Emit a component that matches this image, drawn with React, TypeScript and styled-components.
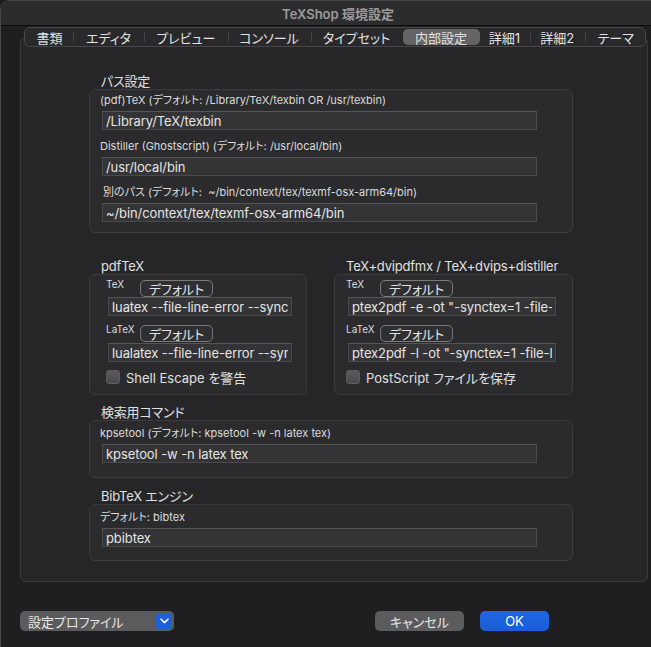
import React from "react";
import styled, { createGlobalStyle } from "styled-components";

const FONT = `Inter, "Noto Sans CJK JP", sans-serif`;

const GlobalStyle = createGlobalStyle`
  html, body {
    margin: 0;
    padding: 0;
    background: #1e1e20;
  }
  * {
    box-sizing: border-box;
  }
`;

const Window = styled.div`
  width: 651px;
  height: 647px;
  display: flex;
  flex-direction: column;
  overflow: hidden;
  background: #1f1f21;
  border-left: 1px solid #48484a;
  border-top: 1px solid #48484a;
  border-top-left-radius: 10px;
  font-family: ${FONT};
  font-feature-settings: "palt";
  color: #dedede;
`;

const TitleBar = styled.div`
  height: 25px;
  flex: none;
  display: flex;
  align-items: center;
  justify-content: center;
  padding-left: 24px;
  background: #2c2c2e;
  border-bottom: 1px solid #0b0b0c;
  color: #9b9b9d;
  font-size: 13px;
  font-weight: 600;
`;

const Body = styled.div`
  flex: 1;
  display: flex;
  flex-direction: column;
  padding: 0 3px 0 19px;
`;

const TabBar = styled.div`
  position: relative;
  z-index: 1;
  display: flex;
  width: 622px;
  height: 20px;
  margin: 1px 0 0 4px;
  padding: 0 1px;
  border: 1px solid #48484a;
  border-radius: 6px;
  background: #29292b;
`;

const Tab = styled.div<{ $w: number; $active?: boolean; $sep?: boolean }>`
  position: relative;
  width: ${(p) => p.$w}px;
  flex: none;
  display: flex;
  align-items: center;
  justify-content: center;
  font-size: 13px;
  color: #e2e2e2;
  margin: 1px 0;
  border-radius: 5px;
  background: ${(p) => (p.$active ? "#646466" : "transparent")};
  &::before {
    content: "";
    display: ${(p) => (p.$sep ? "block" : "none")};
    position: absolute;
    left: 0;
    top: 3px;
    bottom: 3px;
    width: 1px;
    background: #444446;
  }
`;

const Panel = styled.div`
  margin-top: -10px;
  height: 545px;
  border: 1px solid #3a3a3c;
  border-radius: 6px;
  background: #262628;
  padding: 35px 0 0 68px;
  display: flex;
  flex-direction: column;
`;

const Section = styled.div<{ $mt?: number; $w?: number }>`
  margin-top: ${(p) => p.$mt ?? 0}px;
  width: ${(p) => p.$w ?? 484}px;
  display: flex;
  flex-direction: column;
`;

const SectionTitle = styled.div`
  height: 16px;
  line-height: 16px;
  font-size: 13px;
  letter-spacing: -0.2px;
  padding-left: 12px;
  color: #e0e0e0;
  white-space: nowrap;
`;

const Group = styled.div<{ $pt?: number; $pb?: number; $pl?: number }>`
  border: 1px solid #3c3c3e;
  border-radius: 6px;
  background: #2b2b2d;
  padding: ${(p) => p.$pt ?? 4}px 0 ${(p) => p.$pb ?? 10}px
    ${(p) => p.$pl ?? 10}px;
  display: flex;
  flex-direction: column;
`;

const FieldLabel = styled.div<{ $indent?: number; $mt?: number }>`
  font-size: 11px;
  line-height: 14px;
  height: 14px;
  margin-top: ${(p) => p.$mt ?? 0}px;
  padding-left: ${(p) => p.$indent ?? 0}px;
  color: #dcdcdc;
  white-space: nowrap;
`;

const TextField = styled.input<{ $w: number; $ml?: number; $mt?: number }>`
  width: ${(p) => p.$w}px;
  height: 19px;
  margin: ${(p) => p.$mt ?? 4}px 0 0 ${(p) => p.$ml ?? 2}px;
  padding: 0 3px;
  border: 1px solid #4a4a4c;
  border-top-color: #555557;
  background: #343436;
  color: #e4e4e4;
  font-family: ${FONT};
  font-size: 13px;
  letter-spacing: -0.1px;
  outline: none;
`;

const Columns = styled.div`
  display: flex;
  gap: 27px;
`;

const CmdRow = styled.div<{ $mt?: number }>`
  display: flex;
  align-items: flex-start;
  height: 17px;
  margin-top: ${(p) => p.$mt ?? 0}px;
`;

const SmallLabel = styled.div`
  width: 34px;
  font-size: 10px;
  line-height: 12px;
  margin-top: -2px;
  color: #dcdcdc;
`;

const OutlineButton = styled.div`
  width: 73px;
  height: 17px;
  display: flex;
  align-items: center;
  justify-content: center;
  border: 1px solid #7a7a7c;
  border-radius: 5px;
  background: #2f2f31;
  font-size: 13px;
  color: #e4e4e4;
`;

const CheckRow = styled.label`
  display: flex;
  align-items: center;
  gap: 6px;
  margin-top: 8px;
  height: 14px;
  font-size: 13px;
  color: #e0e0e0;
`;

const CheckBox = styled.span`
  width: 14px;
  height: 14px;
  border-radius: 3px;
  background: linear-gradient(#5a5a5c, #4a4a4c);
  border: 1px solid #5e5e60;
`;

const Footer = styled.div`
  display: flex;
  align-items: center;
  margin-top: 29px;
  padding-right: 99px;
`;

const Popup = styled.div`
  width: 154px;
  height: 20px;
  display: flex;
  align-items: center;
  justify-content: space-between;
  padding: 0 2px 0 8px;
  border-radius: 5px;
  background: #5b5b5d;
  font-size: 13px;
  color: #e8e8e8;
`;

const PopupArrow = styled.span`
  width: 16px;
  height: 17px;
  border-radius: 4px;
  background: #1f5fd8;
  display: flex;
  align-items: center;
  justify-content: center;
`;

const Actions = styled.div`
  margin-left: auto;
  display: flex;
  gap: 16px;
`;

const PushButton = styled.div<{ $w: number; $primary?: boolean }>`
  width: ${(p) => p.$w}px;
  height: 20px;
  display: flex;
  align-items: center;
  justify-content: center;
  border-radius: 5px;
  background: ${(p) =>
    p.$primary ? "linear-gradient(#1f66e0, #1a5cd6)" : "#5c5c5e"};
  color: ${(p) => (p.$primary ? "#ffffff" : "#e6e6e6")};
  font-size: 13px;
`;

const tabs: { label: string; w: number }[] = [
  { label: "書類", w: 47 },
  { label: "エディタ", w: 71 },
  { label: "プレビュー", w: 83.5 },
  { label: "コンソール", w: 83 },
  { label: "タイプセット", w: 92 },
  { label: "内部設定", w: 77 },
  { label: "詳細1", w: 50 },
  { label: "詳細2", w: 55.5 },
  { label: "テーマ", w: 61.5 },
];

const ACTIVE = 5;

const EngineGroup: React.FC<{
  pl: number;
  fieldW: number;
  tex: string;
  latex: string;
  check: string;
}> = ({ pl, fieldW, tex, latex, check }) => (
  <Group $pt={5} $pb={10} $pl={pl}>
    <CmdRow>
      <SmallLabel>TeX</SmallLabel>
      <OutlineButton>デフォルト</OutlineButton>
    </CmdRow>
    <TextField $w={fieldW} $mt={0} $ml={2} readOnly defaultValue={tex} />
    <CmdRow $mt={9}>
      <SmallLabel>LaTeX</SmallLabel>
      <OutlineButton>デフォルト</OutlineButton>
    </CmdRow>
    <TextField $w={fieldW} $mt={1} $ml={2} readOnly defaultValue={latex} />
    <CheckRow>
      <CheckBox />
      {check}
    </CheckRow>
  </Group>
);

const App: React.FC = () => {
  return (
    <>
      <GlobalStyle />
      <Window>
        <TitleBar>TeXShop 環境設定</TitleBar>
        <Body>
          <TabBar>
            {tabs.map((t, i) => (
              <Tab
                key={t.label}
                $w={t.w}
                $active={i === ACTIVE}
                $sep={i > 0 && i !== ACTIVE && i !== ACTIVE + 1}
              >
                {t.label}
              </Tab>
            ))}
          </TabBar>
          <Panel>
            {/* パス設定 */}
            <Section>
              <SectionTitle>パス設定</SectionTitle>
              <Group $pt={3} $pb={10} $pl={10}>
                <FieldLabel>
                  (pdf)TeX (デフォルト: /Library/TeX/texbin OR /usr/texbin)
                </FieldLabel>
                <TextField $w={435} readOnly defaultValue="/Library/TeX/texbin" />
                <FieldLabel $mt={9}>
                  Distiller (Ghostscript) (デフォルト: /usr/local/bin)
                </FieldLabel>
                <TextField $w={435} readOnly defaultValue="/usr/local/bin" />
                <FieldLabel $mt={9} $indent={3}>
                  別のパス (デフォルト:&nbsp; ~/bin/context/tex/texmf-osx-arm64/bin)
                </FieldLabel>
                <TextField
                  $w={435}
                  readOnly
                  defaultValue="~/bin/context/tex/texmf-osx-arm64/bin"
                />
              </Group>
            </Section>

            {/* エンジン */}
            <Columns>
              <Section $mt={25} $w={218}>
                <SectionTitle>pdfTeX</SectionTitle>
                <EngineGroup
                  pl={16}
                  fieldW={184}
                  tex="luatex --file-line-error --synctex=1"
                  latex="lualatex --file-line-error --synctex=1"
                  check="Shell Escape を警告"
                />
              </Section>
              <Section $mt={25} $w={239}>
                <SectionTitle>TeX+dvipdfmx / TeX+dvips+distiller</SectionTitle>
                <EngineGroup
                  pl={11}
                  fieldW={208}
                  tex={'ptex2pdf -e -ot "-synctex=1 -file-line-error"'}
                  latex={'ptex2pdf -l -ot "-synctex=1 -file-line-error"'}
                  check="PostScript ファイルを保存"
                />
              </Section>
            </Columns>

            {/* 検索用コマンド */}
            <Section $mt={9}>
              <SectionTitle>検索用コマンド</SectionTitle>
              <Group $pt={5} $pb={14} $pl={10}>
                <FieldLabel>kpsetool (デフォルト: kpsetool -w -n latex tex)</FieldLabel>
                <TextField $w={435} readOnly defaultValue="kpsetool -w -n latex tex" />
              </Group>
            </Section>

            {/* BibTeX */}
            <Section $mt={10}>
              <SectionTitle>BibTeX エンジン</SectionTitle>
              <Group $pt={5} $pb={13} $pl={10}>
                <FieldLabel>デフォルト: bibtex</FieldLabel>
                <TextField $w={435} readOnly defaultValue="pbibtex" />
              </Group>
            </Section>
          </Panel>

          <Footer>
            <Popup>
              設定プロファイル
              <PopupArrow>
                <svg width="9" height="6" viewBox="0 0 9 6">
                  <path
                    d="M1 1.2 L4.5 4.6 L8 1.2"
                    fill="none"
                    stroke="#ffffff"
                    strokeWidth="1.6"
                    strokeLinecap="round"
                    strokeLinejoin="round"
                  />
                </svg>
              </PopupArrow>
            </Popup>
            <Actions>
              <PushButton $w={89}>キャンセル</PushButton>
              <PushButton $w={69} $primary>
                OK
              </PushButton>
            </Actions>
          </Footer>
        </Body>
      </Window>
    </>
  );
};

export default App;
